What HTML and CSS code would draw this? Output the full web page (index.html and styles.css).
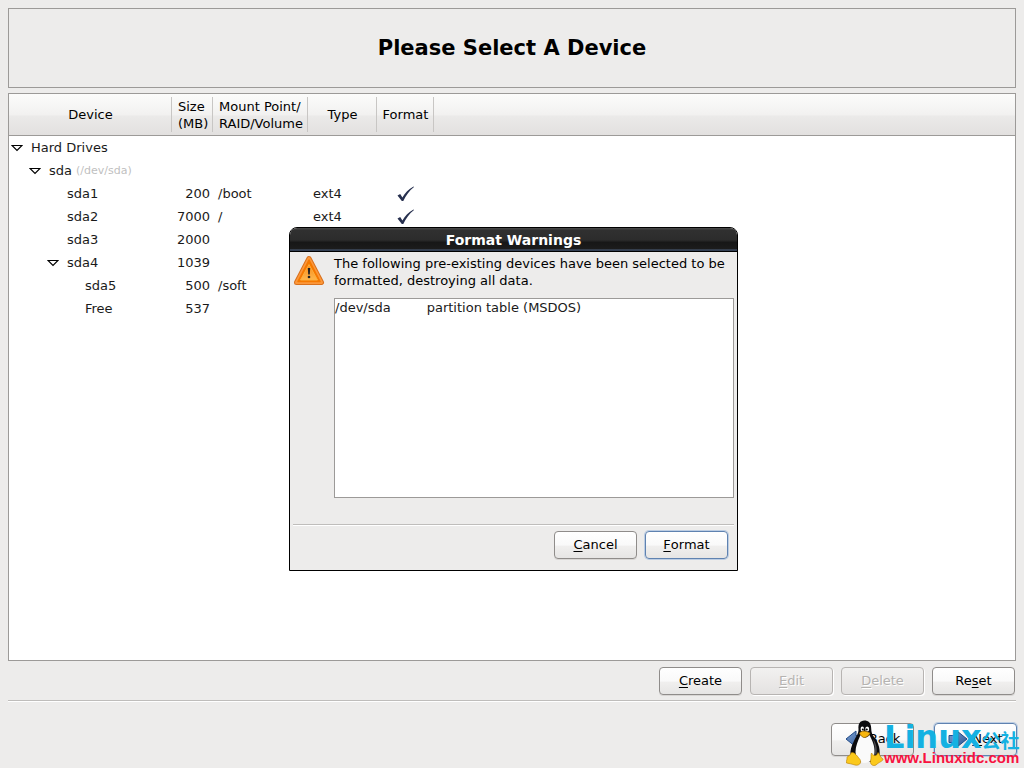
FILE: index.html
```html
<!DOCTYPE html>
<html lang="en">
<head>
<meta charset="utf-8">
<title>Please Select A Device</title>
<link rel="stylesheet" href="styles.css">
</head>
<body>
<svg width="0" height="0" class="defs" aria-hidden="true">
  <defs>
    <linearGradient id="blue" x1="0" y1="0" x2="1" y2="1"><stop offset="0" stop-color="#7da3d6"/><stop offset="1" stop-color="#2a4f8c"/></linearGradient>
    <linearGradient id="orange" x1="0" y1="0" x2="0" y2="1"><stop offset="0" stop-color="#f98a18"/><stop offset="1" stop-color="#fdb64c"/></linearGradient>
    <symbol id="open" viewBox="0 0 12 8"><path d="M1 1.500H11L6 6.500Z" fill="#fff" stroke="#000" stroke-width="1.200"/></symbol>
    <symbol id="check" viewBox="0 0 18 16"><path d="M.5 9.500 3.200 8 5.400 11.500C8 7 11.500 3 16.500.5L17 1C12 5 9 9.500 6.300 15H4.800Z" fill="#27304f"/></symbol>
  </defs>
</svg>
<header class="title"><h1>Please Select A Device</h1></header>
<main class="panel">
  <table class="devices">
    <colgroup><col class="c-device"><col class="c-size"><col class="c-mount"><col class="c-type"><col class="c-format"><col></colgroup>
    <thead><tr><th>Device</th><th class="left">Size<br>(MB)</th><th class="left">Mount Point/<br>RAID/Volume</th><th>Type</th><th>Format</th><th></th></tr></thead>
    <tbody>
      <tr><td><div class="node l0"><svg class="tri"><use href="#open"/></svg>Hard Drives</div></td><td></td><td></td><td></td><td></td><td></td></tr>
      <tr><td><div class="node l1"><svg class="tri"><use href="#open"/></svg>sda <small>(/dev/sda)</small></div></td><td></td><td></td><td></td><td></td><td></td></tr>
      <tr><td><div class="node l2"><span class="tri"></span>sda1</div></td><td class="num">200</td><td>/boot</td><td>ext4</td><td class="mark"><svg class="check"><use href="#check"/></svg></td><td></td></tr>
      <tr><td><div class="node l2"><span class="tri"></span>sda2</div></td><td class="num">7000</td><td>/</td><td>ext4</td><td class="mark"><svg class="check"><use href="#check"/></svg></td><td></td></tr>
      <tr><td><div class="node l2"><span class="tri"></span>sda3</div></td><td class="num">2000</td><td></td><td></td><td></td><td></td></tr>
      <tr><td><div class="node l2"><svg class="tri"><use href="#open"/></svg>sda4</div></td><td class="num">1039</td><td></td><td></td><td></td><td></td></tr>
      <tr><td><div class="node l3"><span class="tri"></span>sda5</div></td><td class="num">500</td><td>/soft</td><td></td><td></td><td></td></tr>
      <tr><td><div class="node l3"><span class="tri"></span>Free</div></td><td class="num">537</td><td></td><td></td><td></td><td></td></tr>
    </tbody>
  </table>
</main>
<div class="actions">
  <button type="button"><u>C</u>reate</button>
  <button type="button" disabled><u>E</u>dit</button>
  <button type="button" disabled><u>D</u>elete</button>
  <button type="button">Re<u>s</u>et</button>
</div>
<footer class="nav">
  <button type="button"><svg width="20" height="20" viewBox="0 0 20 20"><path d="M1 10 11 2V6.500H19V13.500H11V18Z" fill="url(#blue)" stroke="#204a87"/></svg><span><u>B</u>ack</span></button>
  <button type="button" class="default"><svg width="20" height="20" viewBox="0 0 20 20"><path d="M19 10 9 2V6.500H1V13.500H9V18Z" fill="url(#blue)" stroke="#204a87"/></svg><span><u>N</u>ext</span></button>
</footer>

<section class="dialog" role="dialog" aria-labelledby="dlg-title">
  <h2 id="dlg-title">Format Warnings</h2>
  <div class="content">
    <div class="warning">
      <svg width="32" height="32" viewBox="0 0 32 32" aria-hidden="true"><path d="M16 3.500 28.500 27.500H3.500Z" fill="#ce5c00" stroke="#d9701c" stroke-width="5" stroke-linejoin="round"/><path d="M16 3.500 28.500 27.500H3.500Z" fill="#f57900" stroke="#fb983c" stroke-width="3" stroke-linejoin="round"/><path d="M16 5 27 26.500H5Z" fill="#f57900" stroke="#f57900" stroke-width="1.500" stroke-linejoin="round"/><path d="M16 9.500 24.500 25H7.500Z" fill="url(#orange)" stroke="#fcaf3e" stroke-linejoin="round"/><path d="M14.800 13H17.200L16.800 19.500H15.200Z" fill="#222"/><circle cx="16" cy="22" r="1.300" fill="#222"/></svg>
      <p>The following pre-existing devices have been selected to be formatted, destroying all data.</p>
    </div>
    <div class="list"><span>/dev/sda</span><span>partition table (MSDOS)</span></div>
    <div class="choices">
      <button type="button"><u>C</u>ancel</button>
      <button type="button" class="default"><u>F</u>ormat</button>
    </div>
  </div>
</section>

<div class="watermark">
  <svg width="38" height="46" viewBox="0 0 38 46" aria-hidden="true">
    <path d="M18.500.5C14 .5 12 4 12.500 9C12.700 14 9.500 17 7.500 22C5.500 26 4 30 4.500 35L10 42H27L33.500 35C34.500 28 31.500 21 28 17C25 13 25.500 10 25 6.500C24.500 2.500 22 .5 18.500.5Z" fill="#0b0b0e"/>
    <path d="M14.500 15C12 21 9.500 26 9.500 32C10 37 12 42 18 43C24 43 28 39 28.500 33C29 26 26 20 23.500 15C20 19 17 18 14.500 15Z" fill="#fafafa"/>
    <path d="M27 19C30 23 31.500 28 30.500 34L28.500 35C29.500 28 28.500 24 27 19Z" fill="#4a4a4f"/>
    <ellipse cx="16.300" cy="9" rx="1.700" ry="2.400" fill="#fff"/><ellipse cx="21.200" cy="9" rx="2" ry="2.500" fill="#fff"/>
    <circle cx="16.800" cy="9.500" r="1"/><circle cx="20.700" cy="9.500" r="1.100"/>
    <path d="M13.500 13C16 10.500 19 10.500 24 13C23.500 15.500 19.500 17.500 18 17.500C16 17 14 15 13.500 13Z" fill="#f7b50c" stroke="#ad7000" stroke-width=".6"/>
    <path d="M5 33C8 31.500 10 34.500 14 39.500C16 43 13 46 9 45C6 44 3 43.500.5 43C-.5 41 1.500 40 1 37.500C1.500 35.500 4 36.500 5 33Z" fill="#fbc91c" stroke="#b77a00" stroke-width=".6"/>
    <path d="M25.500 33C28 37 31 36 32 32.500C34 34 33.500 37 37 39C37.500 41 33 42 30 45C27 46.500 24 44.500 24.500 41C25.500 38 24.500 35.500 25.500 33Z" fill="#fbc91c" stroke="#b77a00" stroke-width=".6"/>
  </svg>
  <div class="brand"><div class="name">Linux<span lang="zh">公社</span></div><div class="url">www.Linuxidc.com</div></div>
</div>
</body>
</html>
```
FILE: styles.css
```css
* { box-sizing: border-box; }
body {
  margin: 0;
  min-height: 100vh;
  padding: 8px 8px 12px;
  display: flex;
  flex-direction: column;
  background: #edeceb;
  color: #1a1a1a;
  font: 13px/17px "DejaVu Sans", sans-serif;
}
.defs { position: absolute; }
.title {
  display: flex;
  height: 80px;
  align-items: center;
  justify-content: center;
  border: 1px solid #9c9a98;
  color: #000;
}
h1 { margin: 0; font-size: 21px; line-height: 25px; }
.panel {
  flex: 1;
  margin-top: 5px;
  background: #fff;
  border: 1px solid #9c9a98;
}
.devices {
  width: 100%;
  table-layout: fixed;
  border-collapse: separate;
  border-spacing: 0;
}
.c-device { width: 163px; }
.c-size { width: 41px; }
.c-mount { width: 95px; }
.c-type { width: 69px; }
.c-format { width: 57px; }
th {
  height: 42px;
  padding: 0;
  font-weight: normal;
  color: #000;
  white-space: nowrap;
  border-bottom: 1px solid #9c9a98;
  background: linear-gradient(#c8c6c4, #c8c6c4) right 3px / 1px 35px no-repeat, linear-gradient(#fcfcfb, #f2f1f0 50%, #ebeae9 54%, #e2e0df);
}
th:last-child { background: linear-gradient(#fcfcfb, #f2f1f0 50%, #ebeae9 54%, #e2e0df); }
th.left { text-align: left; padding-left: 6px; }
td { height: 23px; padding: 0 0 0 5px; white-space: nowrap; }
td:first-child { padding-left: 2px; }
td.num { text-align: right; padding: 0 3px 0 0; }
td.mark { padding: 0 0 0 20px; }
.node { display: flex; align-items: center; }
.node small { margin-left: 4px; font-size: 11px; color: #bfbfbf; }
.l1 { padding-left: 18px; }
.l2 { padding-left: 36px; }
.l3 { padding-left: 54px; }
.tri { width: 12px; height: 8px; margin-right: 8px; }
.check { display: block; width: 18px; height: 16px; }
button {
  display: flex;
  align-items: center;
  justify-content: center;
  width: 83px;
  height: 28px;
  padding: 0 0 2px;
  border: 1px solid #8f8c8a;
  border-radius: 4px;
  background: linear-gradient(#fff, #f9f9f9 50%, #f0efee 55%, #e6e5e4);
  box-shadow: 0 1px 0 #d8d6d4;
  color: #000;
  font: inherit;
}
u { text-underline-offset: 2px; text-decoration-thickness: 1px; }
button:disabled { color: #b5b3b1; border-color: #b7b4b2; background: linear-gradient(#f2f1f0, #e4e2e1); box-shadow: 1px 1px 0 #fff; text-shadow: 1px 1px 0 #fff; }
button.default { border-color: #5f82b0; box-shadow: 0 0 0 1px #bccde3; }
.actions {
  display: flex;
  justify-content: flex-end;
  gap: 8px;
  padding: 6px 1px 5px 0;
  border-bottom: 1px solid #bfbdbb;
  box-shadow: 0 1px 0 #fff;
}
.nav { display: flex; justify-content: flex-end; gap: 20px; padding-top: 22px; margin-right: -1px; }
.nav button { height: 33px; gap: 4px; }
.dialog {
  position: absolute;
  top: 227px;
  left: 289px;
  width: 449px;
  height: 344px;
  display: flex;
  flex-direction: column;
  border: 1px solid #000;
  border-radius: 8px 8px 0 0;
  background: #edeceb;
  overflow: hidden;
}
h2 {
  margin: 0;
  height: 25px;
  font-size: 14px;
  line-height: 24px;
  text-align: center;
  color: #fff;
  background: linear-gradient(#4a4a4a, #303030 10%, #2c2c2c 50%, #171717 60%, #1c1c1c 88%, #5a7195 92%, #000 96%);
}
.content { flex: 1; display: flex; flex-direction: column; padding: 3px 3px 11px; }
.warning { display: flex; gap: 9px; }
.warning p { margin: 0; color: #000; }
.warning svg { flex: none; }
.list {
  display: flex;
  gap: 36px;
  height: 200px;
  margin: 9px 0 26px 41px;
  border: 1px solid #9c9a98;
  background: #fff;
}
.choices {
  display: flex;
  justify-content: flex-end;
  gap: 8px;
  padding: 6px 6px 0;
  border-top: 1px solid #bfbdbb;
  box-shadow: inset 0 1px 0 #fff;
}
.watermark { position: absolute; right: 4px; bottom: 2px; display: flex; align-items: flex-end; }
.brand { width: 136px; white-space: nowrap; color: #14b1e2; }
.name { font-size: 32px; line-height: 21px; font-weight: bold; }
.name span { font: bold 19px/20px "Noto Sans CJK SC", sans-serif; }
.url { font: bold 15px/16px "Liberation Sans", sans-serif; color: #f8123f; }
```
